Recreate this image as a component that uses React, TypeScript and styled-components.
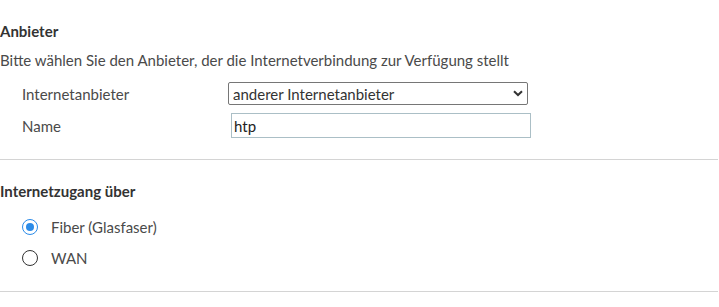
import React from "react";
import styled, { createGlobalStyle } from "styled-components";

const Global = createGlobalStyle`
  html, body { margin: 0; padding: 0; background: #fff; }
  body { font-family: "Source Sans Pro", Lato, "Liberation Sans", sans-serif; color: #4a4a4a; }
`;

const Page = styled.div`
  width: 719px;
  padding-top: 20px;
`;

const Section = styled.section<{ $top: number; $bottom: number }>`
  border-bottom: 1px solid #d4d4d4;
  width: 718px;
  padding-top: ${(p) => p.$top}px;
  padding-bottom: ${(p) => p.$bottom}px;
`;

const Heading = styled.h3`
  margin: 0;
  font-size: 15px;
  line-height: 22px;
  font-weight: 700;
  color: #333;
`;

const Desc = styled.p`
  margin: 7px 0 0;
  font-size: 15px;
  line-height: 22px;
`;

const FormGrid = styled.div`
  display: grid;
  grid-template-columns: 206px 310px;
  row-gap: 8px;
  margin-top: 11px;
  padding-left: 22px;
  align-items: center;
`;

const Label = styled.label`
  font-size: 15px;
  line-height: 22px;
`;

const SelectWrap = styled.div`
  position: relative;
  width: 300px;
  height: 23px;
`;

const Select = styled.select`
  appearance: none;
  width: 300px;
  height: 23px;
  box-sizing: border-box;
  border: 1px solid #767676;
  border-radius: 2px;
  background: #fff;
  font: inherit;
  font-size: 15px;
  color: #333;
  padding: 0 0 0 4px;
  margin: 0;
`;

const Chevron = styled.svg`
  position: absolute;
  right: 5px;
  top: 8px;
  pointer-events: none;
`;

const Input = styled.input`
  width: 300px;
  height: 25px;
  box-sizing: border-box;
  margin: 0 0 0 3px;
  border: 1px solid #abbfc6;
  border-radius: 0;
  font: inherit;
  font-size: 15px;
  color: #222;
  padding: 0 0 0 2px;
  outline: none;
`;

const RadioList = styled.div`
  display: flex;
  flex-direction: column;
  gap: 9px;
  margin-top: 14px;
  padding-left: 22px;
`;

const RadioRow = styled.label`
  display: flex;
  align-items: center;
  gap: 13px;
  font-size: 15px;
  line-height: 22px;
`;

const RadioCircle = styled.span<{ $checked: boolean }>`
  width: 16px;
  height: 16px;
  box-sizing: border-box;
  border-radius: 50%;
  border: 1.6px solid ${(p) => (p.$checked ? "#2b8be8" : "#333")};
  display: flex;
  align-items: center;
  justify-content: center;
  &::after {
    content: "";
    width: 8px;
    height: 8px;
    border-radius: 50%;
    background: ${(p) => (p.$checked ? "#2b8be8" : "transparent")};
  }
`;

export default function App() {
  return (
    <Page>
      <Global />
      <Section $top={0} $bottom={21}>
        <Heading>Anbieter</Heading>
        <Desc>Bitte wählen Sie den Anbieter, der die Internetverbindung zur Verfügung stellt</Desc>
        <FormGrid>
          <Label>Internetanbieter</Label>
          <SelectWrap>
            <Select defaultValue="a">
              <option value="a">anderer Internetanbieter</option>
            </Select>
            <Chevron width="10" height="7" viewBox="0 0 10 7">
              <path d="M1 1.2 L5 5 L9 1.2" fill="none" stroke="#333" strokeWidth="2" />
            </Chevron>
          </SelectWrap>
          <Label>Name</Label>
          <Input defaultValue="htp" />
        </FormGrid>
      </Section>
      <Section $top={20} $bottom={22}>
        <Heading>Internetzugang über</Heading>
        <RadioList>
          <RadioRow>
            <RadioCircle $checked={true} />
            Fiber (Glasfaser)
          </RadioRow>
          <RadioRow>
            <RadioCircle $checked={false} />
            WAN
          </RadioRow>
        </RadioList>
      </Section>
    </Page>
  );
}
